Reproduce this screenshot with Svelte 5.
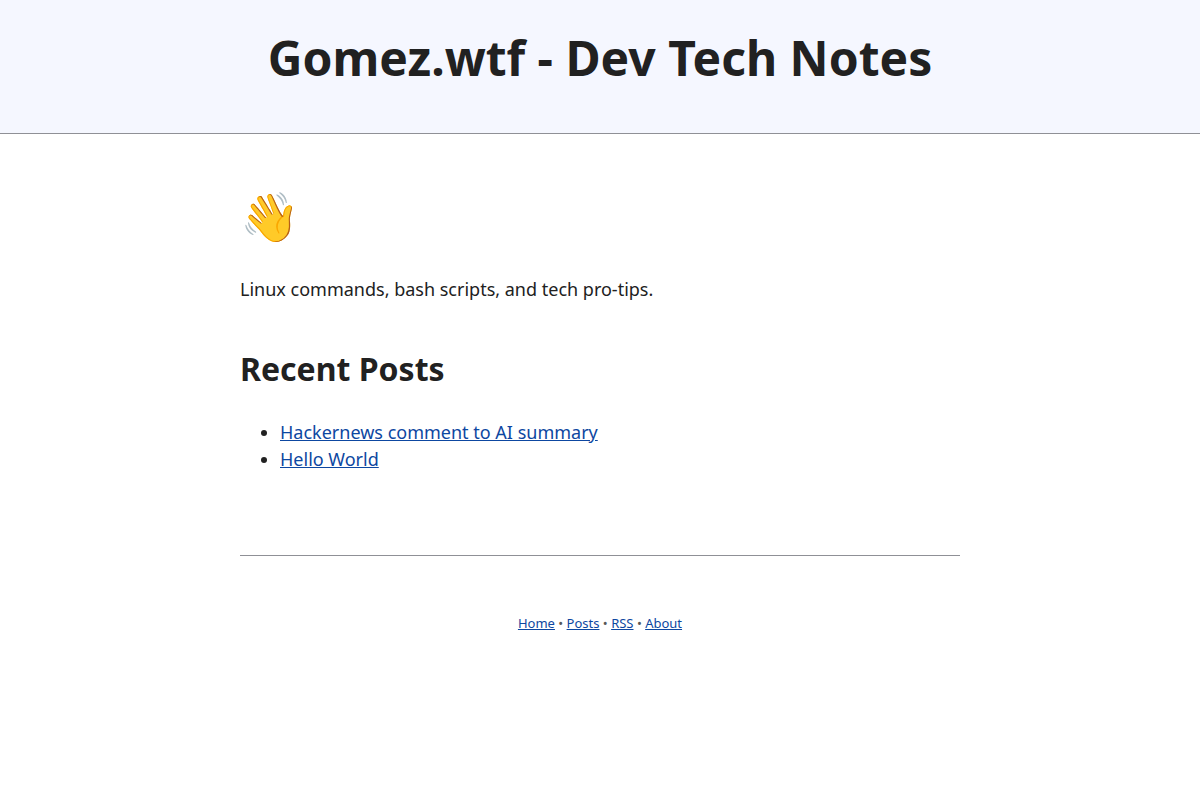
<script lang="ts">
  const posts = [
    { title: 'Hackernews comment to AI summary', href: '#hackernews' },
    { title: 'Hello World', href: '#hello-world' },
  ];

  const links = [
    { label: 'Home', href: '#home' },
    { label: 'Posts', href: '#posts' },
    { label: 'RSS', href: '#rss' },
    { label: 'About', href: '#about' },
  ];
</script>

<header>
  <h1>Gomez.wtf - Dev Tech Notes</h1>
</header>

<main>
  <h1>👋</h1>
  <p>Linux commands, bash scripts, and tech pro-tips.</p>
  <h2>Recent Posts</h2>
  <ul>
    {#each posts as post}
      <li><a href={post.href}>{post.title}</a></li>
    {/each}
  </ul>
</main>

<footer>
  {#each links as link, i}{#if i > 0}{' • '}{/if}<a href={link.href}>{link.label}</a>{/each}
</footer>

<style>
  :global(body) {
    background: #fff;
    color: #212121;
    font-family: "Noto Sans", sans-serif;
    font-size: 18px;
    line-height: 27px;
  }

  header {
    background: #f5f7ff;
    border-bottom: 1px solid #8f9096;
    padding: 32px 8px 50px;
    text-align: center;
  }

  h1 {
    font-size: 48px;
    line-height: 51px;
    margin: 0;
  }

  main,
  footer {
    box-sizing: border-box;
    margin: 0 auto;
    max-width: 720px;
  }

  main {
    padding: 56px 0 82px;
  }

  p {
    margin: 35px 0 47px;
  }

  h2 {
    font-size: 32px;
    line-height: 37px;
    margin: 0 0 32px;
  }

  ul {
    margin: 0;
    padding-left: 40px;
  }

  a {
    color: #0d47a1;
  }

  footer {
    border-top: 1px solid #8f9096;
    color: #585858;
    font-size: 13px;
    padding: 54px 0;
    text-align: center;
  }
</style>
